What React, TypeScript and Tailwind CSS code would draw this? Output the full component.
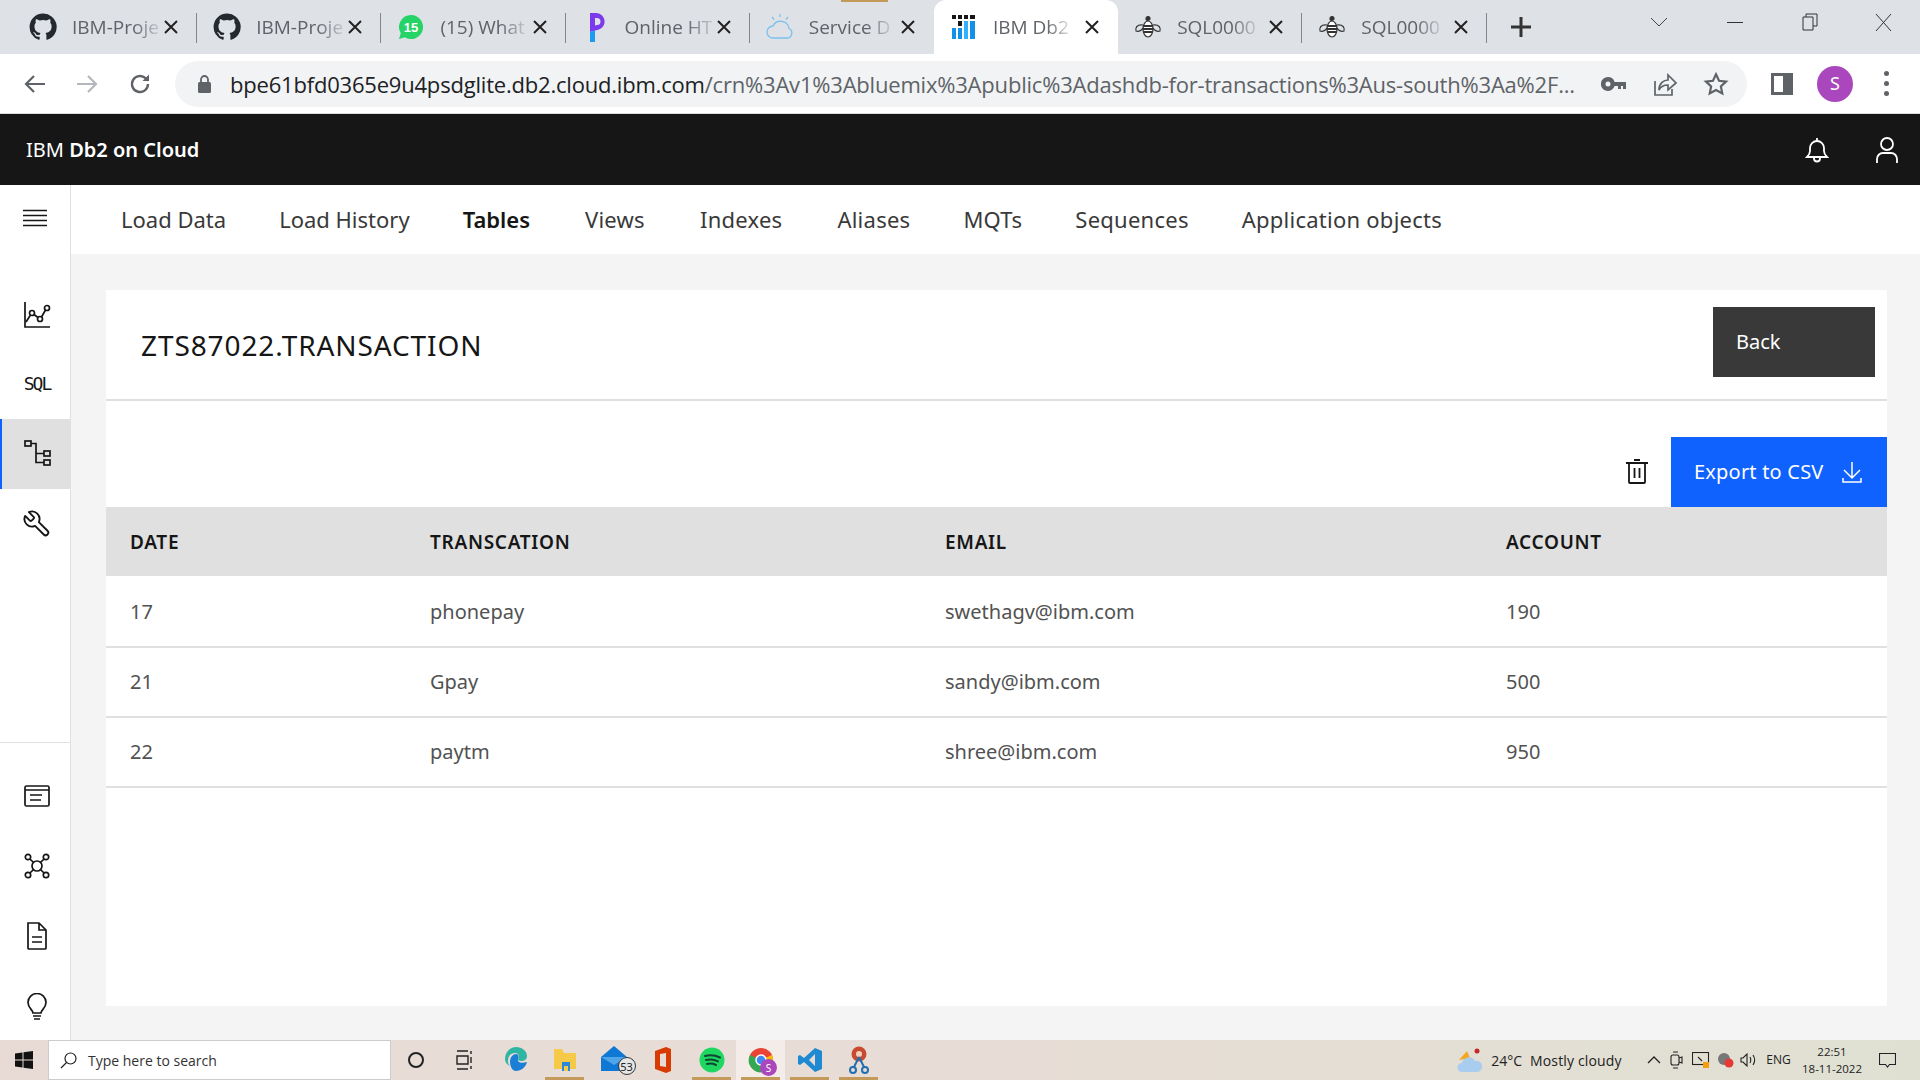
import React from "react";

function GitHub() {
  return (
    <svg width="28" height="28" viewBox="0 0 24 24" fill="#24292f">
      <path d="M12 .5a11.500 11.500 0 0 0-3.640 22.410c.58.100.790-.250.790-.550v-2.100c-3.200.700-3.880-1.370-3.880-1.370-.530-1.330-1.280-1.690-1.280-1.690-1.050-.710.080-.700.080-.700 1.160.080 1.770 1.190 1.770 1.190 1.030 1.760 2.700 1.250 3.360.960.100-.750.400-1.250.730-1.540-2.550-.290-5.240-1.280-5.240-5.680 0-1.250.450-2.280 1.180-3.080-.120-.290-.510-1.460.110-3.040 0 0 .970-.310 3.170 1.180a11 11 0 0 1 5.770 0c2.200-1.490 3.170-1.180 3.170-1.180.630 1.580.230 2.750.110 3.040.740.800 1.180 1.830 1.180 3.080 0 4.410-2.690 5.380-5.250 5.670.410.360.780 1.060.780 2.140v3.170c0 .310.210.660.800.550A11.500 11.500 0 0 0 12 .5z" />
    </svg>
  );
}
function WhatsApp() {
  return (
    <svg width="28" height="28" viewBox="0 0 28 28">
      <path d="M14 2a12 12 0 0 0-10.200 18.300L2 26l5.900-1.700A12 12 0 1 0 14 2z" fill="#25d366" />
      <text x="14" y="19" textAnchor="middle" fontSize="13" fontWeight="700" fill="#fff" fontFamily="Liberation Sans">15</text>
    </svg>
  );
}
function PIcon() {
  return (
    <svg width="28" height="32" viewBox="0 0 28 32">
      <path d="M8 2h6a8.500 8.500 0 0 1 3 16.500L8 21z" fill="#7c3aed" />
      <path d="M13 7h2a3.500 3.500 0 0 1 0 7l-2 .5z" fill="#dee1e6" />
      <path d="M8 21l5-1.500V31H8z" fill="#1d9bf0" />
    </svg>
  );
}
function CloudIcon() {
  return (
    <svg width="28" height="28" viewBox="0 0 28 28" fill="none" stroke="#7cc0ee" strokeWidth="1.300">
      <path d="M7 25h14a5 5 0 0 0 2-9.500A8.500 8.500 0 0 0 7 13a6 6 0 0 0 0 12z" />
      <path d="M14 1v3M6 4l2 2.500M22 4l-2 2.500" />
    </svg>
  );
}
function DbIcon() {
  return (
    <svg width="26" height="26" viewBox="0 0 26 26">
      <rect x="1" y="1" width="4" height="4" fill="#161616" />
      <rect x="7" y="1" width="4" height="4" fill="#161616" />
      <rect x="13" y="1" width="4" height="4" fill="#161616" />
      <rect x="19" y="1" width="5" height="4" fill="#161616" />
      <rect x="1" y="14" width="4" height="11" fill="#1192e8" />
      <rect x="7" y="7" width="4" height="5" fill="#161616" />
      <rect x="7" y="14" width="4" height="11" fill="#1192e8" />
      <rect x="13" y="7" width="4" height="18" fill="#33b1ff" />
      <rect x="19" y="7" width="5" height="18" fill="#1192e8" />
    </svg>
  );
}
function Bee() {
  return (
    <svg width="28" height="24" viewBox="0 0 28 24" fill="none" stroke="#333" strokeWidth="1.200">
      <ellipse cx="14" cy="14" rx="5" ry="8" fill="#fff" />
      <path d="M9 11h10M9 14h10M9.500 17h9" strokeWidth="1.800" />
      <circle cx="14" cy="3.500" r="2" fill="#333" />
      <path d="M9 10C3 9 1 13 2 16c3 1 6-1 7-3M19 10c6-1 8 3 7 6-3 1-6-1-7-3" />
    </svg>
  );
}
function TabClose({ className = "" }: { className?: string }) {
  return (
    <svg width="14" height="14" viewBox="0 0 14 14" stroke="#222" strokeWidth="2" className={"shrink-0 " + className}>
      <path d="M1 1l12 12M13 1L1 13" />
    </svg>
  );
}

function Tab({ icon, title, active, sep = true }: { icon: React.ReactNode; title: string; active?: boolean; sep?: boolean }) {
  return (
    <div className={"relative flex h-[54px] w-[184.200px] shrink-0 items-center pl-[16px] pr-[19px] " + (active ? "rounded-t-[12px] bg-white" : "")}>
      <div className="flex w-[28px] shrink-0 justify-center">{icon}</div>
      <span className="ml-[15px] whitespace-nowrap text-[19px] text-[#5f6368] [font-family:'Open_Sans',sans-serif] [mask-image:linear-gradient(to_right,#000_70%,#0003)]">{title}</span>
      <TabClose className="ml-auto" />
      {sep && <div className="absolute right-0 top-[13px] h-[30px] w-px bg-[#80868b]" />}
    </div>
  );
}

function SideIcon({ children, active, className = "" }: { children: React.ReactNode; active?: boolean; className?: string }) {
  return (
    <div className={"flex h-[69.800px] items-center justify-center " + (active ? "border-l-2 border-[#0f62fe] bg-[#e0e0e0] pl-[3px] " : "pl-[4px] ") + className}>
      {children}
    </div>
  );
}

function TaskIcon({ children, on, bg }: { children: React.ReactNode; on?: boolean; bg?: boolean }) {
  return (
    <div className={"relative flex h-[40px] w-[49px] shrink-0 items-center justify-center " + (bg ? "bg-[#f3ece8]" : "")}>
      {children}
      {on && <div className="absolute bottom-0 left-[5px] right-[5px] h-[3px] bg-[#c49a5a]" />}
    </div>
  );
}

const s = { fill: "none", stroke: "#161616", strokeWidth: 1.700 } as const;

const rows = [
  ["17", "phonepay", "swethagv@ibm.com", "190"],
  ["21", "Gpay", "sandy@ibm.com", "500"],
  ["22", "paytm", "shree@ibm.com", "950"],
];

function Cols({ v, className }: { v: string[]; className: string }) {
  return (
    <div className={"flex items-center " + className}>
      <div className="w-[324px] pl-[24px]">{v[0]}</div>
      <div className="w-[515px]">{v[1]}</div>
      <div className="w-[561px]">{v[2]}</div>
      <div>{v[3]}</div>
    </div>
  );
}

export default function App() {
  return (
    <div className="flex h-[1080px] w-[1920px] flex-col overflow-hidden bg-[#f4f4f4] [font-family:'Noto_Sans',sans-serif]">
      {/* Tab strip */}
      <div className="relative flex h-[54px] shrink-0 items-center bg-[#dee1e6] pl-[13px]">
        <Tab icon={<GitHub />} title="IBM-Proje" />
        <Tab icon={<GitHub />} title="IBM-Proje" />
        <Tab icon={<WhatsApp />} title="(15) What" />
        <Tab icon={<PIcon />} title="Online HT" />
        <Tab icon={<CloudIcon />} title="Service D" sep={false} />
        <Tab icon={<DbIcon />} title="IBM Db2" active sep={false} />
        <Tab icon={<Bee />} title="SQL0000" />
        <Tab icon={<Bee />} title="SQL0000" />
        <svg width="20" height="20" viewBox="0 0 20 20" stroke="#333" strokeWidth="3" className="ml-[24px]"><path d="M10 0v20M0 10h20" /></svg>
        <div className="absolute right-0 top-0 flex h-[44px] items-center">
          <svg width="18" height="10" viewBox="0 0 18 10" fill="none" stroke="#444" strokeWidth="1" className="mr-[59px]"><path d="M1 1l8 8 8-8" /></svg>
          <div className="mr-[59px] h-px w-[16px] bg-[#333]" />
          <svg width="16" height="18" viewBox="0 0 16 18" fill="none" stroke="#333" strokeWidth="1" className="mr-[57.500px]"><path d="M1 4h10v13H1zM4 4V1h11v12h-4" /></svg>
          <svg width="17" height="17" viewBox="0 0 17 17" stroke="#333" strokeWidth="1" className="mr-[28px]"><path d="M1 0l15 17M16 0L1 17" /></svg>
        </div>
        <div className="absolute left-[841px] top-0 h-[2px] w-[47px] bg-[#c49a5a]" />
      </div>

      {/* Address bar */}
      <div className="flex h-[60px] shrink-0 items-center border-b border-[#dadce0] bg-white">
        <svg width="24" height="24" viewBox="0 0 24 24" fill="none" stroke="#5f6368" strokeWidth="2.200" className="ml-[23px]"><path d="M22 12H3M11 4l-8 8 8 8" /></svg>
        <svg width="24" height="24" viewBox="0 0 24 24" fill="none" stroke="#b4b7bb" strokeWidth="2.200" className="ml-[28px]"><path d="M2 12h19M13 4l8 8-8 8" /></svg>
        <svg width="24" height="24" viewBox="0 0 24 24" fill="none" stroke="#5f6368" strokeWidth="2.400" className="ml-[29px]"><path d="M20 12a8 8 0 1 1-2.500-5.800L20 8.500" /><path d="M21 2.500V9h-6.500" fill="#5f6368" stroke="none" /></svg>
        <div className="ml-[23px] flex h-[46px] w-[1572px] items-center rounded-full bg-[#f1f3f4] pl-[22px] pr-[16px]">
          <svg width="15" height="18" viewBox="0 0 15 18" fill="#5f6368" className="shrink-0"><rect x="1" y="7" width="13" height="11" rx="1.500" /><path d="M4 7V4.500a3.500 3.500 0 0 1 7 0V7" fill="none" stroke="#5f6368" strokeWidth="1.800" /></svg>
          <div className="ml-[18px] w-[1348px] shrink-0 overflow-hidden whitespace-nowrap text-[22px] leading-[46px] tracking-[-0.200px] text-[#5f6368] [font-family:'Open_Sans',sans-serif]">
            <span className="text-[#202124]">bpe61bfd0365e9u4psdglite.db2.cloud.ibm.com</span>/crn%3Av1%3Abluemix%3Apublic%3Adashdb-for-transactions%3Aus-south%3Aa%2F...
          </div>
          <svg width="26" height="16" viewBox="0 0 26 16" fill="#5f6368" className="ml-[23px] shrink-0"><path d="M7 1a7 7 0 1 0 6.600 9H17v3h3v-3h2v3h3V6H13.600A7 7 0 0 0 7 1zm0 4.500a2.500 2.500 0 1 1 0 5 2.500 2.500 0 0 1 0-5z" /></svg>
          <svg width="24" height="26" viewBox="0 0 24 26" fill="none" stroke="#5f6368" strokeWidth="1.700" className="ml-[26px] shrink-0"><path d="M2 10v14h17v-6" /><path d="M6 19c0-7 5-10 9-10V4l8 8-8 7v-5c-4 0-7 1-9 5z" /></svg>
          <svg width="26" height="26" viewBox="0 0 24 24" fill="none" stroke="#5f6368" strokeWidth="2" className="ml-[26px] shrink-0"><path d="M12 3l2.800 6 6.500.8-4.800 4.400 1.300 6.500L12 17.500l-5.800 3.200 1.300-6.500-4.800-4.400 6.500-.8z" /></svg>
        </div>
        <svg width="22" height="22" viewBox="0 0 22 22" className="ml-[24px]"><path d="M0 0h22v22H0z" fill="#5f6368" /><path d="M3 3h9v16H3z" fill="#fff" /></svg>
        <div className="ml-[24px] flex h-[36px] w-[36px] items-center justify-center rounded-full bg-[#ab47bc] text-[18px] text-white">S</div>
        <div className="ml-[31px] flex flex-col gap-[5px]">
          <div className="h-[5px] w-[5px] rounded-full bg-[#5f6368]" />
          <div className="h-[5px] w-[5px] rounded-full bg-[#5f6368]" />
          <div className="h-[5px] w-[5px] rounded-full bg-[#5f6368]" />
        </div>
      </div>

      {/* App header */}
      <div className="flex h-[71px] shrink-0 items-center bg-[#161616] pl-[26px] text-white">
        <span className="text-[20px]">IBM <span className="font-semibold">Db2 on Cloud</span></span>
        <svg width="26" height="28" viewBox="0 0 26 28" fill="none" stroke="#fff" strokeWidth="1.800" className="ml-auto"><path d="M3 21c2-2 3-3 3-6v-3a7 7 0 0 1 14 0v3c0 3 1 4 3 6zM10 21v1.500a3 3 0 0 0 6 0V21" /><path d="M13 2v3" /></svg>
        <svg width="24" height="28" viewBox="0 0 24 28" fill="none" stroke="#fff" strokeWidth="1.800" className="ml-[45px] mr-[21px]"><circle cx="12" cy="8" r="6" /><path d="M2 27v-4a6 6 0 0 1 6-6h8a6 6 0 0 1 6 6v4" /></svg>
      </div>

      <div className="flex min-h-0 flex-1">
        {/* Sidebar */}
        <div className="flex h-[855px] w-[71px] shrink-0 flex-col border-r border-[#e0e0e0] bg-white">
          <div className="flex h-[69.800px] items-center justify-center pb-[3px]">
            <svg width="26" height="18" viewBox="0 0 26 18" stroke="#161616" strokeWidth="1.700"><path d="M1 1.500h24M1 6.500h24M1 11.500h24M1 16.500h24" /></svg>
          </div>
          <div className="h-[25px]" />
          <SideIcon>
            <svg width="28" height="28" viewBox="0 0 28 28" {...s}><path d="M2 1v25h25" /><circle cx="9" cy="12" r="2.500" /><circle cx="17" cy="18" r="2.500" /><circle cx="24" cy="7" r="2.500" /><path d="M3 21l4.500-7M11 13.500l4 3M18.500 16l4-7" /></svg>
          </SideIcon>
          <SideIcon>
            <span className="text-[18px] leading-none text-[#161616] [font-family:'DejaVu_Sans_Mono',monospace] tracking-[-2px]">SQL</span>
          </SideIcon>
          <SideIcon active>
            <svg width="28" height="28" viewBox="0 0 28 28" {...s}><rect x="1" y="1" width="6" height="5" /><rect x="20" y="11" width="6" height="5" /><rect x="20" y="20" width="6" height="5" /><path d="M7 3.500h5v19h8M12 13.500h8" /></svg>
          </SideIcon>
          <SideIcon>
            <svg width="30" height="30" viewBox="0 0 24 24" fill="none" stroke="#161616" strokeWidth="1.500" strokeLinejoin="round" className="-scale-x-100"><path d="M14.700 6.300a1 1 0 0 0 0 1.400l1.600 1.600a1 1 0 0 0 1.400 0l3.770-3.770a6 6 0 0 1-7.940 7.940l-6.910 6.910a2.120 2.120 0 0 1-3-3l6.910-6.910a6 6 0 0 1 7.940-7.940l-3.760 3.760z" /></svg>
          </SideIcon>
          <div className="mt-auto border-t border-[#e0e0e0] pt-[18px]">
            <SideIcon>
              <svg width="26" height="22" viewBox="0 0 26 22" {...s}><rect x="1" y="1" width="24" height="20" rx="1.500" /><path d="M1 5h24M6 10h12M6 15h11" /></svg>
            </SideIcon>
            <SideIcon>
              <svg width="26" height="26" viewBox="0 0 26 26" {...s}><circle cx="13" cy="13" r="5" /><circle cx="4" cy="4" r="2.700" /><circle cx="22" cy="4" r="2.700" /><circle cx="4" cy="22" r="2.700" /><circle cx="22" cy="22" r="2.700" /><path d="M6 6l3.500 3.500M20 6l-3.500 3.500M6 20l3.500-3.500M20 20l-3.500-3.500" /></svg>
            </SideIcon>
            <SideIcon className="pt-[1px]">
              <svg width="20" height="28" viewBox="0 0 20 28" {...s}><path d="M1 1h11l7 7v18a1 1 0 0 1-1 1H2a1 1 0 0 1-1-1zM12 1v7h7" /><path d="M5 15h10M5 20h10" /></svg>
            </SideIcon>
            <SideIcon className="pt-[3px]">
              <svg width="20" height="28" viewBox="0 0 20 28" {...s}><path d="M6 20c0-3-5-5-5-10.500a9 9 0 0 1 18 0C19 15 14 17 14 20z" /><path d="M6 23h8M7 26h6" /></svg>
            </SideIcon>
          </div>
        </div>

        <div className="flex min-w-0 flex-1 flex-col">
          {/* Nav */}
          <div className="flex h-[69px] shrink-0 items-center gap-[53px] bg-white pl-[50px] text-[22px] tracking-[0.250px] text-[#393939]">
            <span className="tracking-normal">Load Data</span>
            <span className="tracking-normal">Load History</span>
            <span className="font-semibold tracking-normal text-[#161616]">Tables</span>
            <span className="ml-[2px]">Views</span>
            <span className="ml-[2px]">Indexes</span>
            <span className="ml-[2px]">Aliases</span>
            <span>MQTs</span>
            <span>Sequences</span>
            <span>Application objects</span>
          </div>

          {/* Card */}
          <div className="ml-[35px] mr-[33px] mt-[36px] flex h-[716px] flex-col bg-white">
            <div className="flex h-[111px] shrink-0 items-start justify-between border-b-2 border-[#e0e0e0] pl-[35px] pr-[12px] pt-[17px]">
              <div className="pt-[20px] text-[28px] leading-[36px] tracking-[0.900px] text-[#161616]">ZTS87022.TRANSACTION</div>
              <div className="flex h-[70px] w-[162px] items-center bg-[#393939] pl-[23px] text-[20px] text-white">Back</div>
            </div>
            <div className="flex h-[106px] shrink-0 items-end justify-end">
              <svg width="22" height="26" viewBox="0 0 22 26" fill="none" stroke="#161616" strokeWidth="1.800" className="mb-[23px] mr-[23px]"><path d="M0 5h22M3 5v19a1 1 0 0 0 1 1h14a1 1 0 0 0 1-1V5M8 2h6M8.500 10v10M13.500 10v10" /></svg>
              <div className="flex h-[70px] w-[216px] items-center bg-[#0f62fe] pl-[23px] text-[20px] tracking-[0.200px] text-white">
                Export to CSV
                <svg width="20" height="22" viewBox="0 0 20 22" fill="none" stroke="#fff" strokeWidth="1.500" className="ml-[18px]"><path d="M10 1v15M2 9l8 8 8-8M1 17v4h18v-4" /></svg>
              </div>
            </div>
            <Cols v={["DATE", "TRANSCATION", "EMAIL", "ACCOUNT"]} className="h-[69px] shrink-0 bg-[#e0e0e0] pt-[2px] text-[19px] font-semibold tracking-[0.700px] text-[#161616]" />
            <div className="h-[2px] shrink-0" />
            {rows.map((r) => (
              <Cols key={r[0]} v={r} className="h-[70px] shrink-0 border-b-2 border-[#e0e0e0] text-[20px] text-[#525252]" />
            ))}
          </div>
        </div>
      </div>

      {/* Taskbar */}
      <div className="flex h-[40px] shrink-0 items-center bg-gradient-to-r from-[#e8dbd6] via-[#e8ddd6] to-[#dfe0d2] text-[#222]">
        <svg width="18" height="18" viewBox="0 0 18 18" fill="#111" className="ml-[15px]"><path d="M0 2.500l7.500-1v7H0zM8.500 1.300L18 0v8.500H8.500zM0 9.500h7.500v7l-7.500-1zM8.500 9.500H18V18l-9.500-1.300z" /></svg>
        <div className="ml-[15px] flex h-[40px] w-[343px] items-center border border-[#ccc] bg-white pl-[11px] text-[14px] text-[#333] [font-family:'Open_Sans',sans-serif]">
          <svg width="17" height="17" viewBox="0 0 17 17" fill="none" stroke="#222" strokeWidth="1.200"><circle cx="10.500" cy="6.500" r="5.500" /><path d="M6.500 10.500L1 16" /></svg>
          <span className="ml-[11px]">Type here to search</span>
        </div>
        <div className="ml-[17px] h-[16px] w-[16px] rounded-full border-[2.500px] border-[#222]" />
        <svg width="18" height="20" viewBox="0 0 18 20" fill="none" stroke="#222" strokeWidth="1.400" className="ml-[32px] mr-[17px]"><path d="M1 1h11M1 19h11M1 6h11v8H1zM15 1v3M15 7v6M15 16v3" /></svg>
        <TaskIcon>
          <svg width="26" height="28" viewBox="0 0 26 28"><path d="M2 13C2 5 8 1 13 1c6 0 11 4 11 9 0 4-3 5-6 5-2 0-3-1-3-2 2-2 1-6-3-6-5 0-7 4-7 8 0 2 .5 4 2 5-3-1-5-4-5-7z" fill="#2fb6a3" /><path d="M7 16c0-5 3-8 6-8 3 0 3 3 2 5-1 3 3 5 9 3-1 5-6 9-11 9-4 0-6-5-6-9z" fill="#1b7fd6" /></svg>
        </TaskIcon>
        <TaskIcon on>
          <svg width="24" height="26" viewBox="0 0 24 26"><path d="M1 2h8l2 4h12v16H1z" fill="#f7c948" /><rect x="9" y="15" width="8" height="9" fill="#2b88d8" /><rect x="11" y="19" width="4" height="5" fill="#f7c948" /></svg>
        </TaskIcon>
        <TaskIcon>
          <div className="relative ml-[6px] h-[30px] w-[34px]">
            <svg width="30" height="28" viewBox="0 0 30 28"><path d="M1 12L14 1l13 11v14H1z" fill="#0f78d4" /><path d="M1 12l13 8 13-8" fill="#50a5e8" /></svg>
            <div className="absolute bottom-0 right-[-2px] flex h-[18px] w-[18px] items-center justify-center rounded-full border border-[#333] bg-[#e6e6e6] text-[11px] leading-none text-[#222]">53</div>
          </div>
        </TaskIcon>
        <TaskIcon>
          <svg width="20" height="28" viewBox="0 0 20 28"><path d="M2 5L13 1l5 2v22l-5 2-11-4z" fill="#d83b01" /><path d="M7 8l6-1v14l-6-1z" fill="#e8dbd6" /></svg>
        </TaskIcon>
        <TaskIcon on>
          <svg width="26" height="26" viewBox="0 0 26 26" fill="none"><circle cx="13" cy="13" r="12.500" fill="#1ed760" /><path d="M6 9c5-1.500 10-1 15 1.500M7 13c4-1 8-.7 12 1.300M8 17c3-.7 6-.5 9 1" stroke="#143" strokeWidth="2" strokeLinecap="round" /></svg>
        </TaskIcon>
        <TaskIcon on bg>
          <svg width="26" height="26" viewBox="0 0 26 26"><circle cx="13" cy="13" r="12" fill="#ea4335" /><path d="M13 13L24 8a12 12 0 0 1-6 16z" fill="#fbbc04" /><path d="M13 13l5 11A12 12 0 0 1 2 8z" fill="#34a853" /><circle cx="13" cy="13" r="5" fill="#4285f4" stroke="#fff" strokeWidth="1.500" /></svg>
          <div className="absolute bottom-[4px] right-[8px] flex h-[17px] w-[17px] items-center justify-center rounded-full bg-[#ab47bc] text-[10px] leading-none text-white">S</div>
        </TaskIcon>
        <TaskIcon on>
          <svg width="26" height="26" viewBox="0 0 26 26"><path d="M18 1l7 3v18l-7 3L7 15l-4 3-2-1V9l2-1 4 3z" fill="#1f8ad2" /><path d="M18 7l-6 6 6 6z" fill="#e8dbd6" /></svg>
        </TaskIcon>
        <TaskIcon on>
          <svg width="24" height="30" viewBox="0 0 24 30" fill="none"><circle cx="12" cy="9" r="7.500" fill="#c84b2f" /><circle cx="12" cy="9" r="3" fill="#f1d0c0" /><path d="M12 12l-5 10M12 12l5 10" stroke="#1f6fb2" strokeWidth="2" /><circle cx="6" cy="25" r="3" stroke="#1f6fb2" strokeWidth="2" /><circle cx="18" cy="25" r="3" stroke="#1f6fb2" strokeWidth="2" /></svg>
        </TaskIcon>

        <svg width="28" height="26" viewBox="0 0 28 26" className="ml-auto"><path d="M3 13l8-9 3 7z" fill="#f5a623" /><circle cx="21" cy="4" r="2.500" fill="#c62828" /><path d="M6 25a4.500 4.500 0 0 1 0-9 7 7 0 0 1 13-2 5.500 5.500 0 0 1 3 11z" fill="#a8cdee" /></svg>
        <span className="ml-[7px] text-[14px] [font-family:'Open_Sans',sans-serif]">24°C</span>
        <span className="ml-[8px] text-[14px] tracking-[0.150px] [font-family:'Open_Sans',sans-serif]">Mostly cloudy</span>
        <svg width="14" height="8" viewBox="0 0 14 8" fill="none" stroke="#222" strokeWidth="1.300" className="ml-[25px]"><path d="M1 7l6-6 6 6" /></svg>
        <svg width="13" height="18" viewBox="0 0 13 18" fill="none" stroke="#222" strokeWidth="1.100" className="ml-[9.600px]"><rect x="1" y="4" width="8" height="10" rx="2" /><path d="M9 7l3-1v6l-3-1M3 1h5M3 17h5" /></svg>
        <svg width="18" height="16" viewBox="0 0 18 16" fill="none" stroke="#222" strokeWidth="1.100" className="ml-[8.400px]"><rect x=".5" y=".5" width="16" height="12" /><path d="M6 5l4 4" /><rect x="11" y="10" width="6" height="6" fill="#f59e0b" stroke="none" /></svg>
        <svg width="18" height="16" viewBox="0 0 18 16" className="ml-[6.600px]"><circle cx="8" cy="7" r="6" fill="#777" /><circle cx="13" cy="11" r="4.500" fill="#e53935" /></svg>
        <svg width="18" height="14" viewBox="0 0 18 14" fill="none" stroke="#222" strokeWidth="1.100" className="ml-[6px]"><path d="M1 5h2l4-4v12l-4-4H1zM10 4c1 2 1 4 0 6M13 2c2 3 2 7 0 10" /></svg>
        <span className="ml-[8px] text-[12px] [font-family:'Open_Sans',sans-serif]">ENG</span>
        <div className="ml-[12.300px] flex w-[58px] flex-col items-center text-[11.500px] leading-[17px] [font-family:'Open_Sans',sans-serif]">
          <span>22:51</span>
          <span className="whitespace-nowrap">18-11-2022</span>
        </div>
        <svg width="17" height="15" viewBox="0 0 17 15" fill="none" stroke="#222" strokeWidth="1.100" className="ml-[18px] mr-[24px]"><path d="M.5.500h16v11h-6l-2 2.500-2-2.500h-6z" /></svg>
      </div>
    </div>
  );
}
